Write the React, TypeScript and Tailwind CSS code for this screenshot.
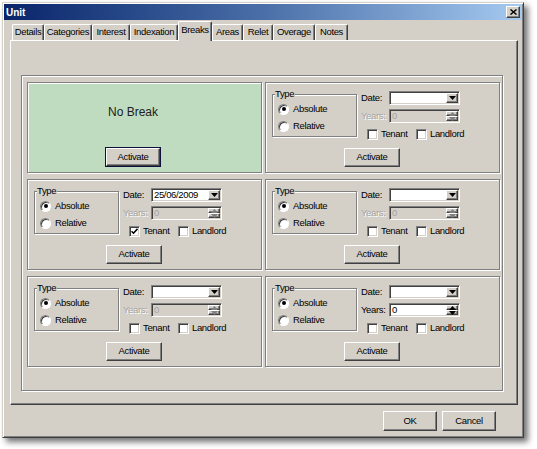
import React from "react";

// classic win2k-ish bevels
const raised =
  "border border-t-white border-l-white border-r-[#404040] border-b-[#404040] bg-[#d4d0c8] shadow-[inset_-1px_-1px_0_#808080]";
const sunken =
  "border border-t-[#808080] border-l-[#808080] border-r-white border-b-white shadow-[inset_1px_1px_0_#404040,inset_-1px_-1px_0_#d4d0c8]";
const etched = "border border-[#808080] shadow-[inset_1px_1px_0_#fff,1px_1px_0_#fff]";

const tabs = [
  { label: "Details", w: "w-[32px]" },
  { label: "Categories", w: "w-[48px]" },
  { label: "Interest", w: "w-[38px]" },
  { label: "Indexation", w: "w-[48px]" },
  { label: "Breaks", w: "w-[34px]", active: true },
  { label: "Areas", w: "w-[31px]" },
  { label: "Relet", w: "w-[30px]" },
  { label: "Overage", w: "w-[42px]" },
  { label: "Notes", w: "w-[33px]" },
];

const Arrow = ({ up = false, off = false }: { up?: boolean; off?: boolean }) => (
  <svg width="7" height="4" viewBox="0 0 7 4">
    <path d={up ? "M3.5 0L7 4H0z" : "M0 0h7L3.5 4z"} fill={off ? "#808080" : "#000"} />
  </svg>
);

const Radio = ({ on = false }: { on?: boolean }) => (
  <span className="flex h-[11px] w-[11px] items-center justify-center rounded-full border border-t-[#808080] border-l-[#808080] border-r-white border-b-white bg-white shadow-[inset_1px_1px_0_#404040]">
    {on && <span className="h-[4px] w-[4px] rounded-full bg-black" />}
  </span>
);

const Check = ({ on = false }: { on?: boolean }) => (
  <span className={`flex h-[11px] w-[11px] items-center justify-center bg-white ${sunken}`}>
    {on && (
      <svg width="7" height="7" viewBox="0 0 7 7">
        <path d="M0.5 3.2l2 2 4-4.4" stroke="#000" strokeWidth="1.6" fill="none" />
      </svg>
    )}
  </span>
);

const Button = ({ label, cls = "" }: { label: string; cls?: string }) => (
  <div className={`flex items-center justify-center ${raised} ${cls}`}>{label}</div>
);

const BreakPanel = ({
  date = "",
  tenant = false,
  years = false,
}: {
  date?: string;
  tenant?: boolean;
  years?: boolean;
}) => (
  <div className={`flex h-[91px] flex-col pl-[6px] pt-[8px] ${etched}`}>
    <div className="flex">
      <div className={`relative mt-[3px] h-[43px] w-[85px] pl-[5px] pt-[8px] ${etched}`}>
        <span className="absolute -top-[7px] left-[2px] bg-[#d4d0c8] pr-[1px] leading-[12px]">Type</span>
        <div className="flex h-[12px] items-center gap-[4px]">
          <Radio on />
          Absolute
        </div>
        <div className="mt-[5px] flex h-[12px] items-center gap-[4px]">
          <Radio />
          Relative
        </div>
      </div>
      <div className="ml-[4px] flex flex-col">
        <div className="flex h-[14px] items-center">
          <span className="w-[28px]">Date:</span>
          <div className={`flex h-[14px] w-[71px] items-center bg-white ${sunken}`}>
            <span className="flex-1 pl-[2px] leading-[12px]">{date}</span>
            <span className={`m-[1px] flex h-[10px] w-[12px] items-center justify-center ${raised}`}>
              <Arrow />
            </span>
          </div>
        </div>
        <div className="mt-[4px] flex h-[14px] items-center">
          <span
            className={`w-[28px] ${years ? "text-black" : "text-[#a3a3a3] [text-shadow:1px_1px_0_#fff]"}`}
          >
            Years:
          </span>
          <div
            className={`flex h-[14px] w-[71px] items-center ${years ? "bg-white" : "bg-[#d4d0c8]"} ${sunken}`}
          >
            <span className={`flex-1 pl-[2px] leading-[12px] ${years ? "text-black" : "text-[#a3a3a3]"}`}>0</span>
            <span className="m-[1px] flex w-[12px] flex-col">
              <span className={`flex h-[5px] items-center justify-center ${raised}`}>
                <Arrow up off={!years} />
              </span>
              <span className={`flex h-[5px] items-center justify-center ${raised}`}>
                <Arrow off={!years} />
              </span>
            </span>
          </div>
        </div>
        <div className="mt-[5px] flex h-[12px] items-center pl-[6px]">
          <span className="flex w-[49px] items-center gap-[3px]">
            <Check on={tenant} />
            Tenant
          </span>
          <span className="flex items-center gap-[3px]">
            <Check />
            Landlord
          </span>
        </div>
      </div>
    </div>
    <Button label="Activate" cls="ml-[72px] mt-[8px] h-[19px] w-[56px]" />
  </div>
);

export default function App() {
  return (
    <div className="h-[449px] w-[537px] bg-white p-[2px] font-['Liberation_Sans',Arial,sans-serif] text-[9.5px] tracking-[-0.35px] text-black">
      <div className="flex h-[436px] w-[522px] flex-col border border-t-[#d4d0c8] border-l-[#d4d0c8] border-r-[#404040] border-b-[#404040] bg-[#d4d0c8] p-[1px] shadow-[inset_1px_1px_0_#fff,inset_-1px_-1px_0_#808080,4px_4px_6px_rgba(0,0,0,0.55)]">
        {/* title bar */}
        <div className="flex h-[16px] items-center justify-between bg-linear-to-r from-[#0a246a] via-[#4a6fa8] to-[#a6caf0] pl-[2px] pr-[2px]">
          <span className="text-[10px] font-bold tracking-normal text-white">Unit</span>
          <span className={`flex h-[12px] w-[14px] items-center justify-center ${raised}`}>
            <svg width="7" height="6" viewBox="0 0 7 6">
              <path d="M0.5 0.5l6 5M6.5 0.5l-6 5" stroke="#000" strokeWidth="1.5" />
            </svg>
          </span>
        </div>

        <div className="mt-[2px] flex flex-col pl-[6px]">
          {/* tabs */}
          <div className="flex h-[18px] items-end pl-[2px]">
            {tabs.map((t) => (
              <div
                key={t.label}
                className={`flex items-center justify-center rounded-t-[2px] border border-b-0 border-t-white border-l-white border-r-[#404040] bg-[#d4d0c8] shadow-[inset_-1px_0_0_#808080] ${t.w} ${
                  t.active ? "relative z-10 -mb-[1px] h-[20px] pb-[2px]" : "h-[16px]"
                }`}
              >
                {t.label}
              </div>
            ))}
          </div>

          {/* tab page */}
          <div className="flex h-[365px] w-[508px] flex-col border border-t-white border-l-white border-r-[#404040] border-b-[#404040] pl-[10px] pt-[34px] shadow-[inset_-1px_-1px_0_#808080]">
            <div className={`h-[316px] w-[482px] pl-[5px] pt-[6px] ${etched}`}>
              <div className="grid w-[473px] grid-cols-2 gap-x-[3px] gap-y-[6px]">
                <div className={`flex h-[91px] bg-[#c0dcc0] pl-[77px] pt-[21px] ${etched}`}>
                  <div className="flex w-[56px] flex-col items-center">
                    <span className="whitespace-nowrap text-[12px] leading-[16px] tracking-normal text-[#202020]">
                      No Break
                    </span>
                    <div className="mt-[27px] border border-[#10103a]">
                      <Button label="Activate" cls="h-[18px] w-[54px]" />
                    </div>
                  </div>
                </div>
                <BreakPanel />
                <BreakPanel date="25/06/2009" tenant />
                <BreakPanel />
                <BreakPanel />
                <BreakPanel years />
              </div>
            </div>
          </div>

          {/* dialog buttons */}
          <div className="mt-[6px] flex w-[508px] justify-end gap-[5px] pr-[22px]">
            <Button label="OK" cls="h-[20px] w-[54px]" />
            <Button label="Cancel" cls="h-[20px] w-[54px]" />
          </div>
        </div>
      </div>
    </div>
  );
}
